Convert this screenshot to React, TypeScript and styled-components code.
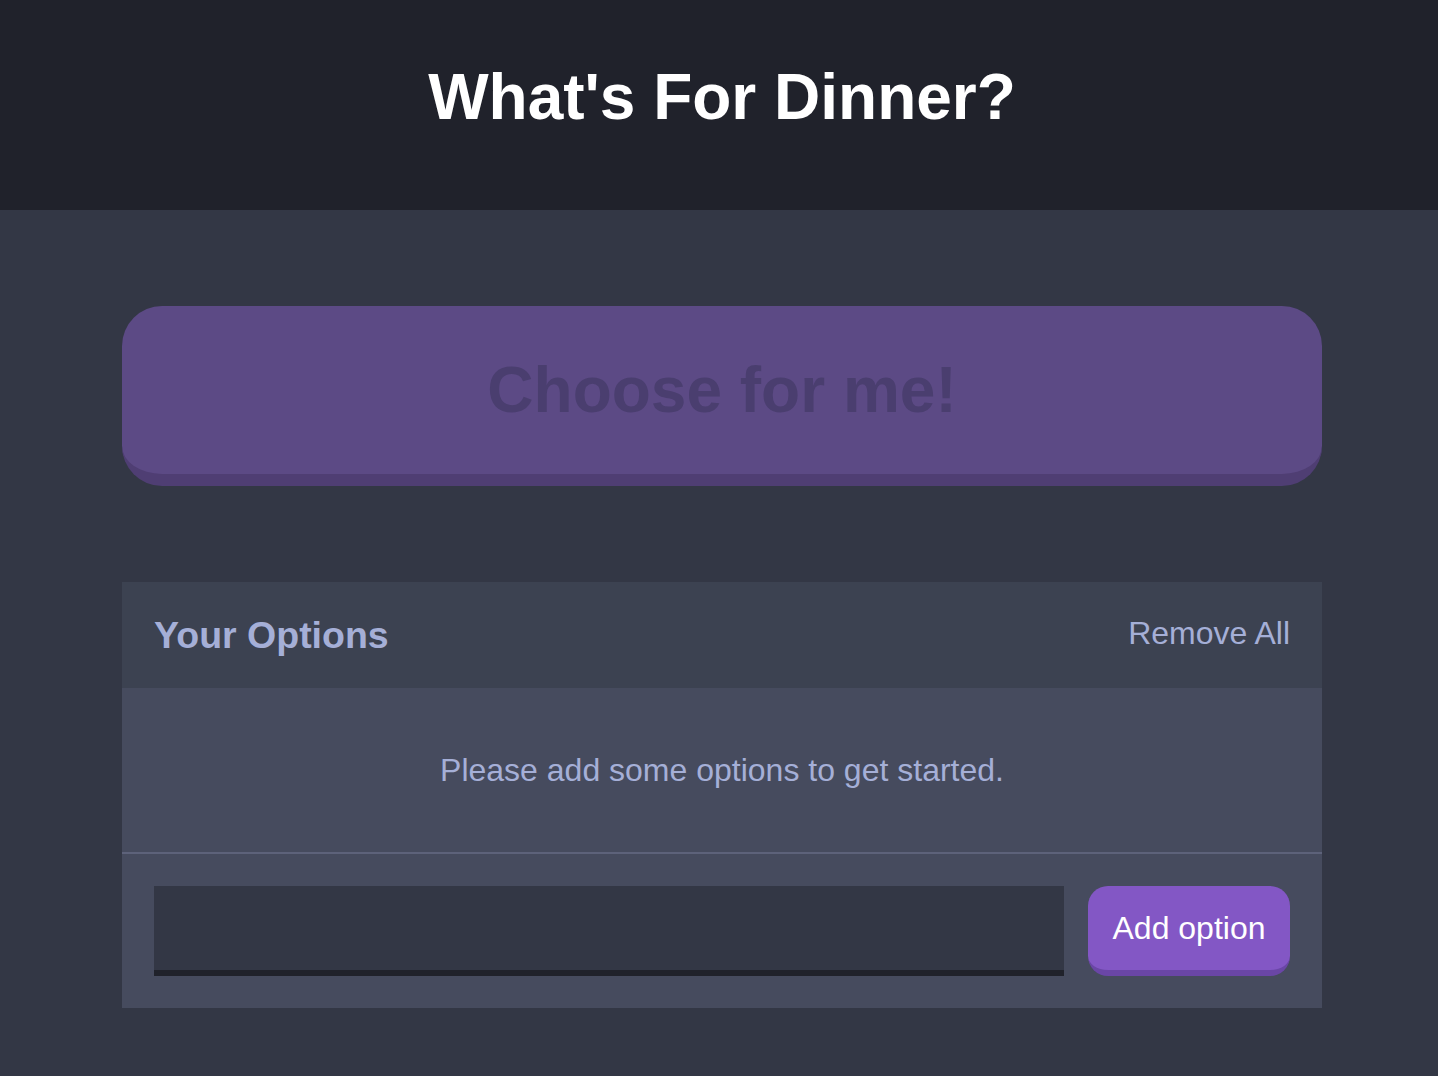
import React from "react";
import styled, { createGlobalStyle } from "styled-components";

const GlobalStyle = createGlobalStyle`
  html, body {
    margin: 0;
    padding: 0;
    background: #333745;
    font-family: "Liberation Sans", Arial, Helvetica, sans-serif;
  }
  * { box-sizing: border-box; }
`;

const Page = styled.div`
  min-height: 1076px;
  background: #333745;
`;

const Header = styled.header`
  height: 210px;
  background: #20222b;
  display: flex;
  align-items: center;
  justify-content: center;
  padding-left: 6px;
`;

const Title = styled.h1`
  margin: 0 0 16px;
  color: #ffffff;
  font-size: 64px;
  font-weight: 700;
  line-height: 1;
`;

const Container = styled.main`
  width: 1200px;
  margin-left: calc(50% - 597px);
  padding-top: 96px;
  display: flex;
  flex-direction: column;
`;

const BigButton = styled.button`
  width: 100%;
  height: 180px;
  border: none;
  border-bottom: 12px solid #4f3e73;
  border-radius: 40px;
  background: #5c4a85;
  color: #4a3e6f;
  font-family: inherit;
  font-size: 64px;
  font-weight: 700;
  padding: 0;
  margin-bottom: 96px;
  cursor: default;
`;

const Widget = styled.section`
  background: #464b5e;
`;

const WidgetHeader = styled.div`
  background: #3c4251;
  height: 106px;
  padding: 0 32px;
  display: flex;
  align-items: center;
  justify-content: space-between;
`;

const WidgetTitle = styled.h3`
  margin: 0;
  color: #a5afd7;
  font-size: 37.5px;
  font-weight: 700;
`;

const LinkButton = styled.button`
  background: none;
  border: none;
  padding: 0;
  margin-bottom: 4px;
  color: #a5afd7;
  font-family: inherit;
  font-size: 32px;
`;

const Message = styled.p`
  margin: 0;
  height: 166px;
  border-bottom: 2px solid #5d627a;
  display: flex;
  align-items: center;
  justify-content: center;
  color: #a5afd7;
  font-size: 32px;
`;

const Form = styled.form`
  display: flex;
  gap: 24px;
  padding: 32px;
`;

const Input = styled.input`
  flex: 1;
  height: 90px;
  border: none;
  border-bottom: 6px solid #20222b;
  background: #333745;
  color: #a5afd7;
  font-family: inherit;
  font-size: 32px;
  padding: 0 24px;
  outline: none;
`;

const AddButton = styled.button`
  width: 202px;
  height: 90px;
  border: none;
  border-bottom: 6px solid #6a46a6;
  border-radius: 20px;
  background: #8357c5;
  color: #ffffff;
  font-family: inherit;
  font-size: 32px;
  padding: 0;
`;

export default function App() {
  return (
    <Page>
      <GlobalStyle />
      <Header>
        <Title>What's For Dinner?</Title>
      </Header>
      <Container>
        <BigButton disabled>Choose for me!</BigButton>
        <Widget>
          <WidgetHeader>
            <WidgetTitle>Your Options</WidgetTitle>
            <LinkButton>Remove All</LinkButton>
          </WidgetHeader>
          <Message>Please add some options to get started.</Message>
          <Form onSubmit={(e) => e.preventDefault()}>
            <Input type="text" name="option" />
            <AddButton type="submit">Add option</AddButton>
          </Form>
        </Widget>
      </Container>
    </Page>
  );
}
